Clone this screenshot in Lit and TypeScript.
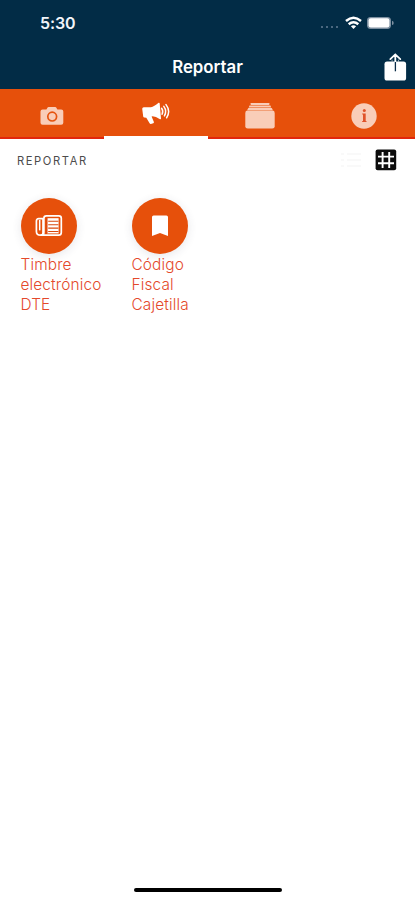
import { LitElement, html, css, svg } from "lit";
import { customElement, property, state } from "lit/decorators.js";
import { classMap } from "lit/directives/class-map.js";

const camera = html`<svg width="24" height="20" viewBox="0 0 24 20">
  <path fill="currentColor" fill-rule="evenodd" d="M2.6 3.6H6.4L7.6 1.5Q7.9 1 8.5 1H15.3Q15.9 1 16.2 1.5L17.4 3.6H21.2Q23.3 3.6 23.3 5.6V16.8Q23.3 18.8 21.2 18.8H2.6Q.5 18.8 .5 16.8V5.6Q.5 3.6 2.6 3.6Z"/>
  <circle cx="12.2" cy="10.6" r="4.4" fill="none" stroke="#e6540f" stroke-width="1.7"/>
</svg>`;

const megaphone = html`<svg width="30" height="24" viewBox="0 0 30 24">
  <path fill="currentColor" d="M1.2 6.8Q1.3 5.4 2.8 5.3L10 5.2Q13 4.6 17.6 .8Q18.6 .4 18.7 1.6L20 16.5Q20 17.6 19 17.2Q14.6 14.3 11.6 14.2L10.6 14.4L12.9 20.1Q13.1 20.9 12.3 21.2L9.9 21.9Q9.1 22.1 8.6 21.3L5.3 15.7L3.4 15.6Q2.4 15.4 2.2 14.5Z"/>
  <g fill="none" stroke="currentColor" stroke-width="1.5" stroke-linecap="round">
    <path d="M20.6 6.3Q22.6 9 21.1 12.2"/>
    <path d="M22.8 4.4Q26.2 9 23.4 13.9"/>
    <path d="M25 2.6Q30 9 25.6 15.8"/>
  </g>
</svg>`;

const stack = html`<svg width="30" height="28" viewBox="0 0 30 28">
  <g fill="currentColor">
    <rect x="5.4" y="1" width="19.2" height="1.9" rx=".8"/>
    <path d="M4.5 3.4H25.4L26.2 5.5H3.7Z"/>
    <path d="M3.3 6.1H26.8L27.9 8.2H2.1Z"/>
    <rect x=".3" y="8.6" width="29.4" height="18" rx="2.4"/>
  </g>
</svg>`;

const info = html`<svg width="26" height="26" viewBox="0 0 26 26">
  <circle cx="13" cy="13" r="12.7" fill="currentColor"/>
  <circle cx="13.3" cy="7.5" r="1.5" fill="#e0532a"/>
  <path d="M11.2 10.6H14.7V18H15.5V19H11.2V18H12V11.6H11.2Z" fill="#e0532a"/>
</svg>`;

const newspaper = html`<svg width="28" height="24" viewBox="0 0 28 24">
  <g fill="none" stroke="currentColor" stroke-width="1.7">
    <path d="M8 3.8V19Q8 21.2 5.7 21.2Q1.4 21.2 1.4 17.5V7Q1.4 4.7 3.7 4.7H8"/>
    <path d="M5.7 21.2H23.6Q26.3 21.2 26.3 18.5V4.2Q26.3 1.8 23.9 1.8H11.3Q8.9 1.8 8.9 4.2V18.2Q8.9 21.2 6 21.2"/>
    <path d="M4.7 6V16.4" stroke-width="1.5"/>
  </g>
  <rect x="12" y="4.2" width="11.6" height="15.2" fill="currentColor"/>
  <g stroke="#d9480f" stroke-width="1.1">
    <path d="M12 4V19.6M13.2 7.3H23.4M13.2 10.7H23.4M13.2 14.1H23.4M13.2 17.5H23.4"/>
  </g>
</svg>`;

const bookmark = html`<svg width="18" height="22" viewBox="0 0 18 22">
  <path fill="currentColor" d="M2.6 .4H15.4Q17 .4 17 2V20.9L9 18L1 20.9V2Q1 .4 2.6 .4Z"/>
</svg>`;

const share = html`<svg width="24" height="29" viewBox="0 0 24 29">
  <rect x="1.5" y="8.6" width="21.6" height="19" rx="2.6" fill="#fff"/>
  <path d="M7.3 6.1L12.3 1.4L17.3 6.1M12.3 1.6V9" fill="none" stroke="#fff" stroke-width="1.8" stroke-linecap="round"/>
  <path d="M9.1 9V6.6M15.5 9V6.6" stroke="#b9c5ce" stroke-width=".8"/>
  <path d="M12.4 9V18.3" stroke="#0a2c48" stroke-width="1.3"/>
</svg>`;

const wifi = html`<svg width="17" height="14" viewBox="0 0 17 14">
  <g fill="none" stroke="#fff" stroke-width="2.5">
    <path d="M1 5Q8.5 -1.4 16 5"/>
    <path d="M3.7 8.2Q8.5 4.2 13.3 8.2"/>
  </g>
  <path d="M5.9 10.2Q8.5 8.2 11.1 10.2L8.5 12.9Z" fill="#fff"/>
</svg>`;

const battery = html`<svg width="29" height="14" viewBox="0 0 29 14">
  <rect x="1" y=".9" width="24" height="12" rx="3.6" fill="#7c8fa0"/>
  <rect x="2.6" y="2.3" width="20.8" height="9.2" rx="2.2" fill="#fff"/>
  <path d="M26 4.8Q27.7 5.2 27.7 6.9Q27.7 8.6 26 9Z" fill="#7c8fa0"/>
</svg>`;

const rows = [2, 8, 14];
const list = html`<svg width="20" height="17" viewBox="0 0 20 17">
  ${rows.map((y) => svg`<path d="M0 ${y}H3M6 ${y}H20" stroke="#f8f7f8" stroke-width="1.4"/>`)}
</svg>`;

const grid = html`<svg width="22" height="22" viewBox="0 0 22 22">
  <rect x=".6" y=".6" width="20.6" height="20.6" rx="2" fill="#0c0c0c"/>
  <path d="M7.6 3V19M14.2 3V19M3 7.6H19M3 14.2H19" stroke="#fff" stroke-width="1.9"/>
</svg>`;

@customElement("report-action")
class ReportAction extends LitElement {
  @property({ attribute: false }) icon: unknown;
  @property() label = "";

  static styles = css`
    :host { display: block; width: 111px; }
    .disc {
      width: 56px; height: 56px; border-radius: 50%;
      display: flex; align-items: center; justify-content: center;
      background: #e6500b; color: #fff;
      box-shadow: 0 2px 10px rgba(60, 60, 80, 0.12);
    }
    svg { display: block; }
    .label {
      margin-top: 1px; white-space: pre-line;
      font-size: 15.4px; line-height: 20px; font-weight: 300; color: #e4492b;
      letter-spacing: 0.14px;
    }
  `;

  render() {
    return html`<div class="disc">${this.icon}</div><div class="label">${this.label}</div>`;
  }
}

@customElement("app-root")
class AppRoot extends LitElement {
  @state() private active = 1;

  private tabs = [camera, megaphone, stack, info];

  static styles = css`
    :host {
      display: flex; flex-direction: column; height: 900px; width: 415px;
      box-sizing: border-box; background: #fff; overflow: hidden;
      font-family: Inter, "Liberation Sans", sans-serif;
    }
    svg { display: block; }
    .top { background: #022c46; height: 88.5px; color: #fff; }
    .status {
      height: 46px; box-sizing: border-box; padding: 0 20px 0 40px;
      display: flex; align-items: center;
    }
    .time { flex: 1; font-size: 16px; font-weight: 600; color: #f2f5fa; letter-spacing: -0.1px; }
    .dots { display: flex; gap: 3px; margin: 8px 7px 0 0; }
    .dots i { width: 2px; height: 2px; background: #4b6880; }
    .battery { margin-left: 4px; }
    .nav {
      height: 42px; display: grid; grid-template-columns: 1fr auto 1fr;
      align-items: center; padding-right: 8px; padding-left: 8px;
    }
    .title { grid-column: 2; font-size: 16.8px; line-height: 42px; font-weight: 600; }
    .share { justify-self: end; }
    .tabs {
      height: 50.5px; display: grid; grid-template-columns: repeat(4, 1fr);
      background: #e6500b;
    }
    .tab {
      box-sizing: border-box; height: 50.5px; padding: 5.5px 0 0 1px;
      border-bottom: 2px solid #e2260c;
      display: flex; align-items: center; justify-content: center; color: #f9cdb8;
    }
    .tab.on { color: #fff; border-bottom: 3px solid #fff; padding-top: 4px; }
    .bar {
      height: 42px; display: flex; align-items: center; padding: 0 18px 0 17px;
    }
    .heading {
      flex: 1; padding-top: 2px; font-size: 11.2px; letter-spacing: 1.6px; color: #4c4c4c;
    }
    .grid { margin-left: 14px; }
    .actions { display: flex; padding: 17px 20px 0 20.5px; flex: 1; }
    .home { width: 148px; height: 4px; border-radius: 2px; background: #000; margin: 0 auto 8px; }
  `;

  render() {
    return html`
      <div class="top">
        <div class="status">
          <span class="time">5:30</span>
          <span class="dots"><i></i><i></i><i></i><i></i></span>
          ${wifi}
          <span class="battery">${battery}</span>
        </div>
        <div class="nav">
          <span class="title">Reportar</span>
          <span class="share">${share}</span>
        </div>
      </div>
      <div class="tabs">
        ${this.tabs.map(
          (icon, i) => html`<div
            class=${classMap({ tab: true, on: i === this.active })}
            @click=${() => (this.active = i)}
          >${icon}</div>`
        )}
      </div>
      <div class="bar">
        <span class="heading">REPORTAR</span>
        ${list}
        <span class="grid">${grid}</span>
      </div>
      <div class="actions">
        <report-action .icon=${newspaper} label=${"Timbre\nelectrónico\nDTE"}></report-action>
        <report-action .icon=${bookmark} label=${"Código\nFiscal\nCajetilla"}></report-action>
      </div>
      <div class="home"></div>
    `;
  }
}
